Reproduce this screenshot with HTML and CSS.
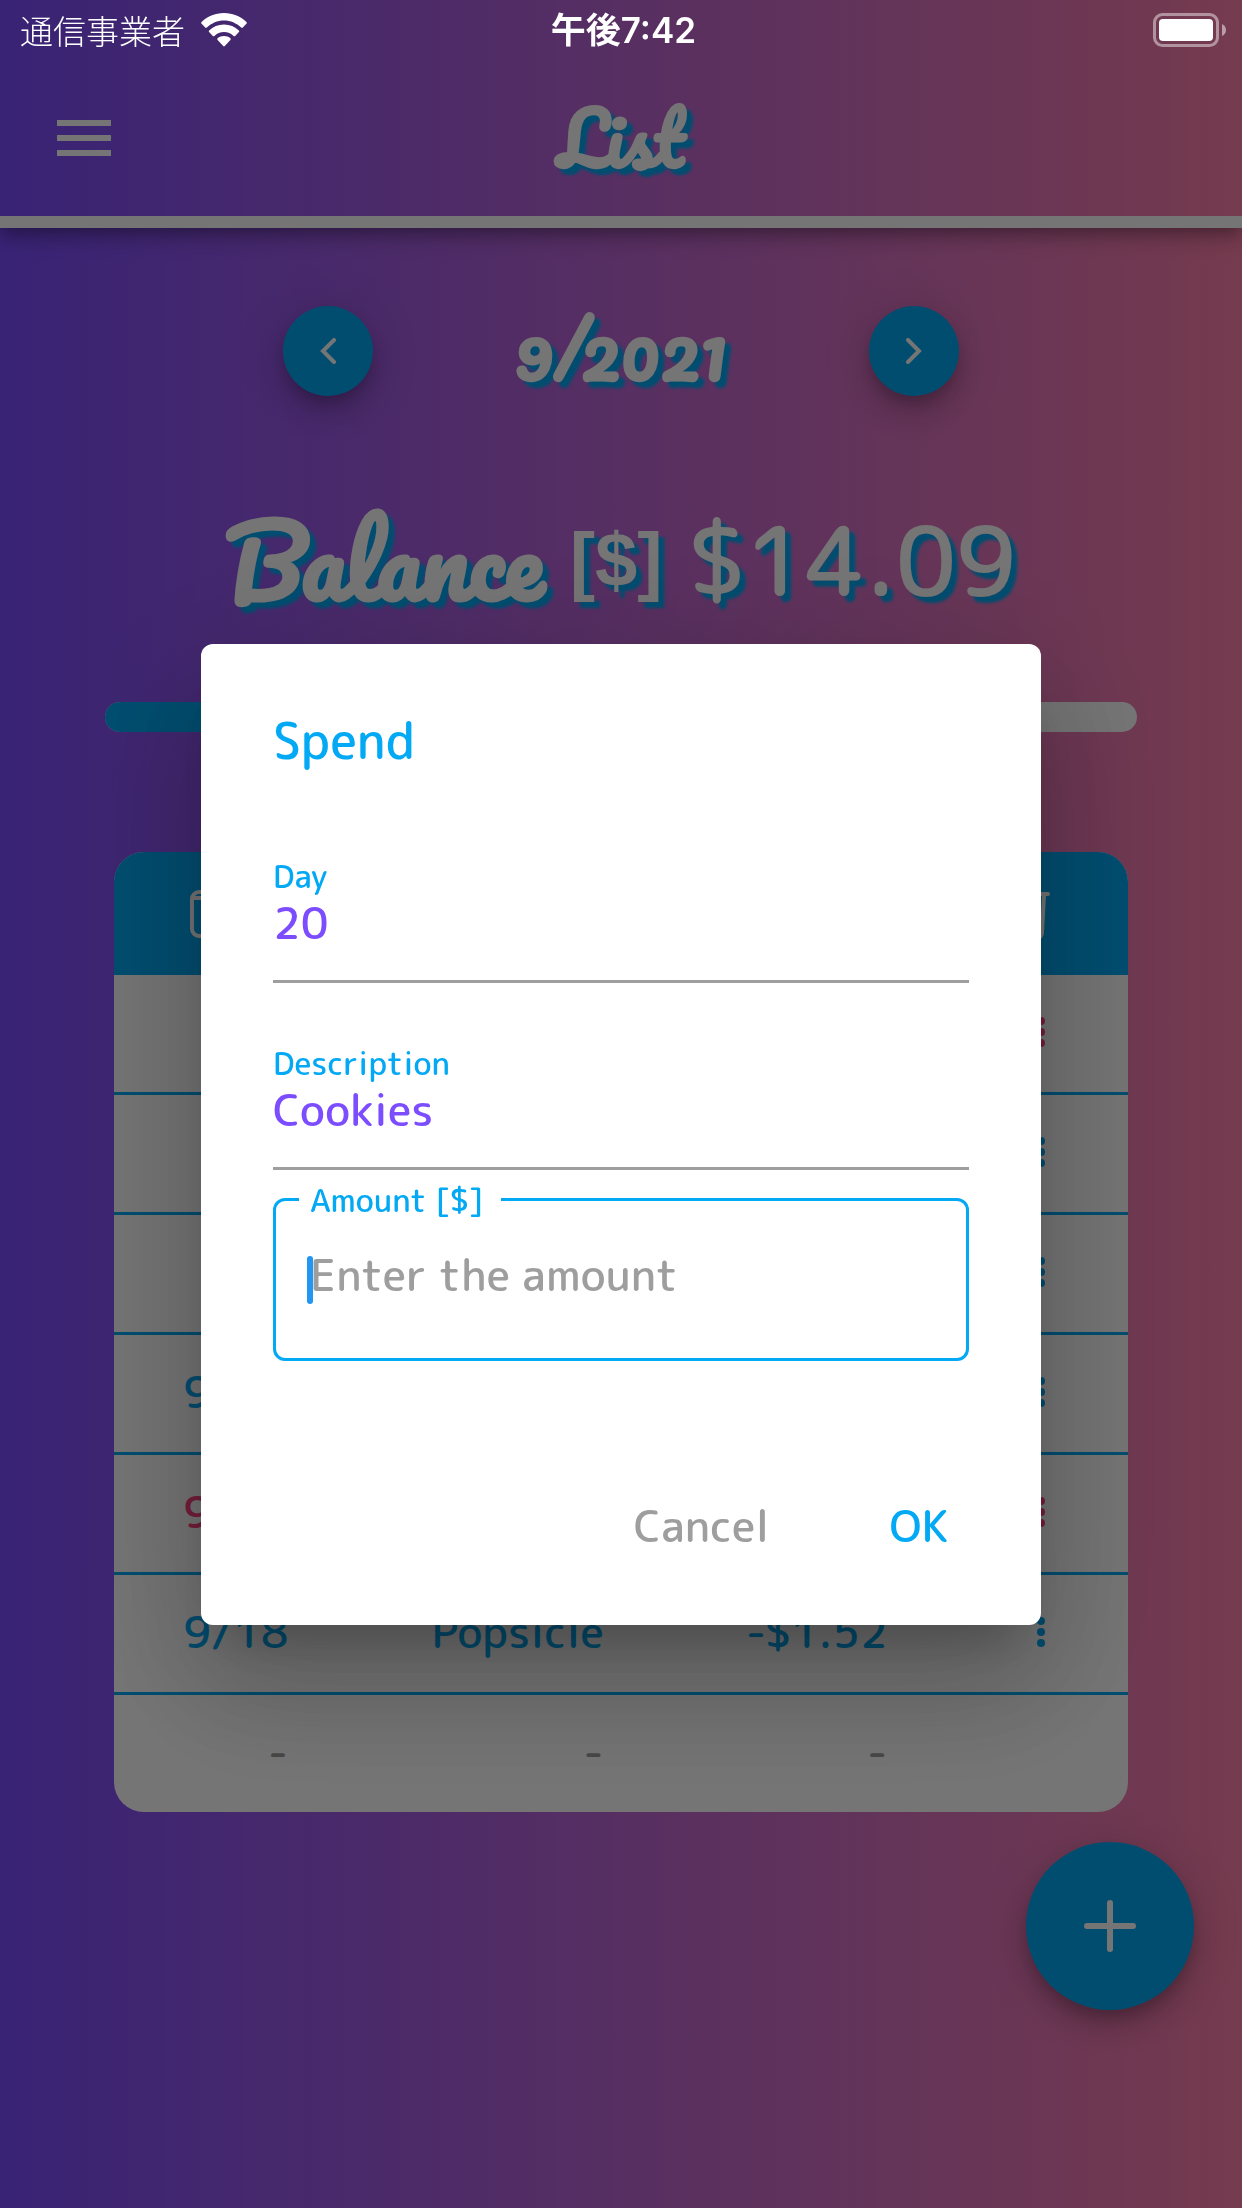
FILE: index.html
```html
<!DOCTYPE html>
<html lang="en">
<head>
<meta charset="utf-8">
<meta name="viewport" content="width=device-width, initial-scale=1">
<title>List</title>
<link rel="stylesheet" href="styles.css">
</head>
<body>
<div class="page">
  <header class="app-bar">
    <button class="menu-button" type="button" aria-label="Menu">
      <svg width="54" height="36" viewBox="0 0 54 36" fill="currentColor"><path d="M0 0h54v6H0zM0 15h54v6H0zM0 30h54v6H0z"/></svg>
    </button>
    <h1 class="app-title">List</h1>
  </header>

  <main class="content">
    <div class="month">
      <button class="round-button" type="button" aria-label="Previous month">
        <svg width="16" height="26" viewBox="0 0 16 26"><path d="M14 2 3 13l11 11"/></svg>
      </button>
      <h2 class="month-label">9/2021</h2>
      <button class="round-button" type="button" aria-label="Next month">
        <svg width="16" height="26" viewBox="0 0 16 26"><path d="m2 2 11 11L2 24"/></svg>
      </button>
    </div>

    <p class="balance">
      <span class="balance-name">Balance</span>
      <span class="balance-unit">[$]</span>
      <span class="balance-value">$14.09</span>
    </p>

    <progress class="meter" value="50" max="100" aria-label="Balance"></progress>

    <div class="card">
      <table class="entries">
        <thead>
          <tr>
            <th class="col-day" aria-label="Day"><svg class="calendar" width="50" height="48" viewBox="0 0 50 48"><rect x="2" y="2" width="46" height="44" rx="7"/><path d="M4 8h42" stroke-width="9"/></svg></th>
            <th class="col-name" aria-label="Description"></th>
            <th class="col-amount" aria-label="Amount"></th>
            <th class="col-more" aria-label="Delete"><svg class="trash" width="44" height="52" viewBox="0 0 44 52"><path d="M2 6h40M15 6V2h14v4M6 7l2 38q1 5 5 5h18q4 0 5-5l2-38M15 16l1 26M22 16v26M29 16l-1 26"/></svg></th>
            <th></th>
          </tr>
        </thead>
        <tbody>
          <tr class="pink"><td></td><td></td><td></td><td><button class="more" type="button" aria-label="More"><svg width="12" height="32" viewBox="0 0 12 32"><circle cx="6" cy="5" r="4"/><circle cx="6" cy="16" r="4"/><circle cx="6" cy="27" r="4"/></svg></button></td><td></td></tr>
          <tr class="blue"><td></td><td></td><td></td><td><button class="more" type="button" aria-label="More"><svg width="12" height="32" viewBox="0 0 12 32"><circle cx="6" cy="5" r="4"/><circle cx="6" cy="16" r="4"/><circle cx="6" cy="27" r="4"/></svg></button></td><td></td></tr>
          <tr class="blue"><td></td><td></td><td></td><td><button class="more" type="button" aria-label="More"><svg width="12" height="32" viewBox="0 0 12 32"><circle cx="6" cy="5" r="4"/><circle cx="6" cy="16" r="4"/><circle cx="6" cy="27" r="4"/></svg></button></td><td></td></tr>
          <tr class="blue"><td>9/15</td><td></td><td></td><td><button class="more" type="button" aria-label="More"><svg width="12" height="32" viewBox="0 0 12 32"><circle cx="6" cy="5" r="4"/><circle cx="6" cy="16" r="4"/><circle cx="6" cy="27" r="4"/></svg></button></td><td></td></tr>
          <tr class="pink"><td>9/15</td><td></td><td></td><td><button class="more" type="button" aria-label="More"><svg width="12" height="32" viewBox="0 0 12 32"><circle cx="6" cy="5" r="4"/><circle cx="6" cy="16" r="4"/><circle cx="6" cy="27" r="4"/></svg></button></td><td></td></tr>
          <tr class="blue"><td>9/18</td><td>Popsicle</td><td>-$1.52</td><td><button class="more" type="button" aria-label="More"><svg width="12" height="32" viewBox="0 0 12 32"><circle cx="6" cy="5" r="4"/><circle cx="6" cy="16" r="4"/><circle cx="6" cy="27" r="4"/></svg></button></td><td></td></tr>
          <tr class="empty"><td>-</td><td>-</td><td>-</td><td></td><td></td></tr>
        </tbody>
      </table>
    </div>
  </main>

  <button class="add-button" type="button" aria-label="Add">
    <svg width="52" height="52" viewBox="0 0 52 52"><path d="M26 3v46M3 26h46"/></svg>
  </button>
</div>

<div class="overlay">
  <form class="dialog" role="dialog" aria-labelledby="dialog-title">
    <h2 class="dialog-title" id="dialog-title">Spend</h2>
    <div class="field">
      <label for="day">Day</label>
      <input id="day" type="text" value="20">
    </div>
    <div class="field">
      <label for="description">Description</label>
      <input id="description" type="text" value="Cookies">
    </div>
    <fieldset class="outlined">
      <legend><label for="amount">Amount [$]</label></legend>
      <div class="amount">
        <input id="amount" type="text" placeholder="Enter the amount">
        <span class="caret"></span>
      </div>
    </fieldset>
    <div class="actions">
      <button class="cancel" type="button">Cancel</button>
      <button class="ok" type="submit">OK</button>
    </div>
  </form>
</div>

<div class="status-bar">
  <div class="carrier">
    <span>通信事業者</span>
    <svg width="46" height="34" viewBox="0 0 46 34" fill="#fff"><path d="M23 0C14 0 6 3.500 .6 9.100q-.8.800 0 1.600l3.600 3.800q.8.800 1.600 0C10.500 10 16.500 7.400 23 7.400s12.500 2.600 17.200 7.100q.8.800 1.600 0l3.600-3.800q.8-.8 0-1.600C40 3.500 32 0 23 0z"/><path d="M23 11.500c-5.800 0-11 2.200-14.900 5.900q-.8.800 0 1.600l3.700 3.900q.8.800 1.600 0c2.500-2.300 5.900-3.800 9.600-3.800s7.100 1.500 9.600 3.800q.8.800 1.600 0l3.700-3.900q.8-.8 0-1.600C34 13.700 28.800 11.500 23 11.500z"/><path d="M23 23c-2.500 0-4.700.9-6.400 2.300q-.8.800 0 1.600l5.600 6.200q.8.800 1.600 0l5.600-6.200q.8-.8 0-1.600C27.700 23.900 25.500 23 23 23z"/></svg>
  </div>
  <time class="clock">午後7:42</time>
  <svg class="battery" width="74" height="34" viewBox="0 0 74 34"><rect x="1.500" y="1.500" width="63" height="31" rx="8" fill="none" stroke="#fff" stroke-opacity=".45" stroke-width="3"/><rect x="6" y="6" width="54" height="22" rx="4" fill="#fff"/><path d="M69 11q4 2 4 6t-4 6z" fill="#fff" fill-opacity=".5"/></svg>
</div>
</body>
</html>
```
FILE: styles.css
```css
* {
  box-sizing: border-box;
}

:root {
  --blue: #03a9f4;
  --pink: #ff4081;
  --purple: #7c4dff;
  --grey: #9e9e9e;
  --backdrop: linear-gradient(90deg, #7c4dff, #ff80ab);
  --raised: 0 9px 15px -3px rgba(0, 0, 0, .2), 0 18px 30px rgba(0, 0, 0, .14), 0 3px 54px rgba(0, 0, 0, .12);
}

body {
  margin: 0;
  font-family: "Rounded Mplus 1c", "M PLUS 1p", Lato, "Noto Sans CJK JP", sans-serif;
  font-weight: 500;
  font-size: 44px;
  line-height: 54px;
}

h1, h2, p {
  margin: 0;
}

button, input {
  font: inherit;
  color: inherit;
  border: 0;
  padding: 0;
  background: none;
}

svg {
  display: block;
}

.page {
  position: relative;
  min-height: 100vh;
  background: var(--backdrop);
}

/* App bar */
.app-bar {
  position: relative;
  display: grid;
  grid-template-columns: 1fr auto 1fr;
  align-items: center;
  height: 228px;
  padding: 60px 57px 0;
  border-bottom: 12px solid #fff;
  background: var(--backdrop);
  box-shadow: 0 6px 12px -3px rgba(0, 0, 0, .2), 0 12px 15px rgba(0, 0, 0, .14), 0 3px 30px rgba(0, 0, 0, .12);
  color: #fff;
}

.menu-button {
  justify-self: start;
}

.app-title,
.month-label,
.balance-name {
  font-family: Pacifico, Lato, sans-serif;
  font-weight: 700;
}

.app-title,
.month-label,
.balance {
  color: #fff;
  text-shadow: 6px 6px 3px var(--blue);
}

.app-title,
.month-label {
  font-size: 72px;
  line-height: 90px;
}

/* Month and balance */
.content {
  padding: 78px 105px;
}

.month {
  display: flex;
  align-items: center;
  justify-content: space-between;
  max-width: 676px;
  margin: 0 auto;
}

.round-button,
.add-button {
  display: grid;
  place-items: center;
  border-radius: 50%;
  background: var(--blue);
  box-shadow: var(--raised);
}

.round-button {
  width: 90px;
  height: 90px;
}

.round-button path,
.add-button path {
  fill: none;
  stroke: #fff;
  stroke-width: 4;
  stroke-linecap: round;
}

.balance {
  display: flex;
  align-items: center;
  justify-content: center;
  gap: 26px;
  margin: 104px 0 82px;
  font-size: 96px;
  line-height: 120px;
}

.balance-unit {
  font-family: "Liberation Sans", sans-serif;
  font-weight: 700;
  font-size: 76px;
}

.meter {
  display: block;
  width: 100%;
  height: 30px;
  border: 0;
  border-radius: 15px;
  overflow: hidden;
  appearance: none;
  background: #fff;
}

.meter::-webkit-progress-bar {
  background: #fff;
}

.meter::-webkit-progress-value {
  background: var(--blue);
}

/* Entries */
.card {
  margin: 120px 9px 0;
  border-radius: 30px;
  overflow: hidden;
  background: #fff;
}

.entries {
  width: 100%;
  table-layout: fixed;
  border-collapse: separate;
  border-spacing: 0;
  text-align: right;
}

.entries th,
.entries td {
  padding: 0;
}

.entries th {
  height: 123px;
  background: var(--blue);
}

.entries td {
  height: 120px;
  padding-bottom: 4px;
  border-bottom: 3px solid var(--blue);
}

.entries .empty td {
  height: 117px;
  border-bottom: 0;
  color: var(--grey);
}

.entries svg {
  margin-left: auto;
}

.entries th path,
.entries th rect {
  fill: none;
  stroke: #fff;
  stroke-width: 4;
  stroke-linecap: round;
}

.entries .calendar {
  margin-right: 48px;
}

.col-day {
  width: 17.2%;
}

.col-name {
  width: 31.1%;
}

.col-amount {
  width: 28%;
}

.col-more {
  width: 16%;
}

.blue {
  color: var(--blue);
}

.pink {
  color: var(--pink);
}

.more {
  display: block;
  margin-left: auto;
  padding-right: 3px;
  fill: currentColor;
}

.add-button {
  position: absolute;
  right: 48px;
  bottom: 198px;
  width: 168px;
  height: 168px;
}

.add-button path {
  stroke-width: 6;
}

/* Dialog */
.overlay {
  position: fixed;
  inset: 0;
  display: grid;
  place-items: center;
  padding-top: 60px;
  background: rgba(0, 0, 0, .54);
}

.dialog {
  width: min(840px, 100% - 240px);
  padding: 64px 72px 54px;
  border-radius: 12px;
  background: #fff;
  box-shadow: 0 33px 45px -21px rgba(0, 0, 0, .2), 0 72px 114px 9px rgba(0, 0, 0, .14), 0 27px 138px 24px rgba(0, 0, 0, .12);
}

.dialog-title {
  margin-bottom: 84px;
  font-weight: 500;
  font-size: 50px;
  line-height: 64px;
  color: var(--blue);
}

.field {
  display: flex;
  flex-direction: column;
  margin-bottom: 60px;
  padding-bottom: 30px;
  border-bottom: 3px solid var(--grey);
}

.field + .outlined {
  margin-top: -50px;
}

.dialog label {
  font-size: 32px;
  line-height: 40px;
  color: var(--blue);
}

.dialog input {
  width: 100%;
  height: 54px;
  color: var(--purple);
  outline: 0;
}

.outlined {
  margin: 0;
  min-width: 0;
  padding: 28px 23px 56px;
  border: 3px solid var(--blue);
  border-radius: 12px;
}

.outlined legend {
  display: flex;
  padding: 0 17px 0 11px;
}

.amount {
  position: relative;
}

.dialog .amount input {
  padding: 0 11px;
}

.amount input::placeholder {
  color: var(--grey);
  opacity: 1;
}

.caret {
  position: absolute;
  left: 8px;
  top: 8px;
  width: 6px;
  height: 48px;
  border-radius: 3px;
  background: #2196f3;
}

.actions {
  display: flex;
  justify-content: flex-end;
  gap: 78px;
  margin-top: 120px;
}

.actions button {
  padding: 18px 21px;
}

.cancel {
  color: var(--grey);
}

.ok {
  color: var(--blue);
}

/* Status bar */
.status-bar {
  position: fixed;
  inset: 0 0 auto;
  display: grid;
  grid-template-columns: 1fr auto 1fr;
  align-items: center;
  height: 60px;
  padding: 0 15px 0 20px;
  line-height: 40px;
  color: #fff;
}

.carrier {
  display: flex;
  align-items: center;
  gap: 16px;
  font-family: "Noto Sans CJK JP", sans-serif;
  font-weight: 300;
  font-size: 33px;
}

.clock {
  font-family: Inter, "Noto Sans CJK JP", sans-serif;
  font-weight: 600;
  font-size: 35px;
}

.battery {
  justify-self: end;
}
```
